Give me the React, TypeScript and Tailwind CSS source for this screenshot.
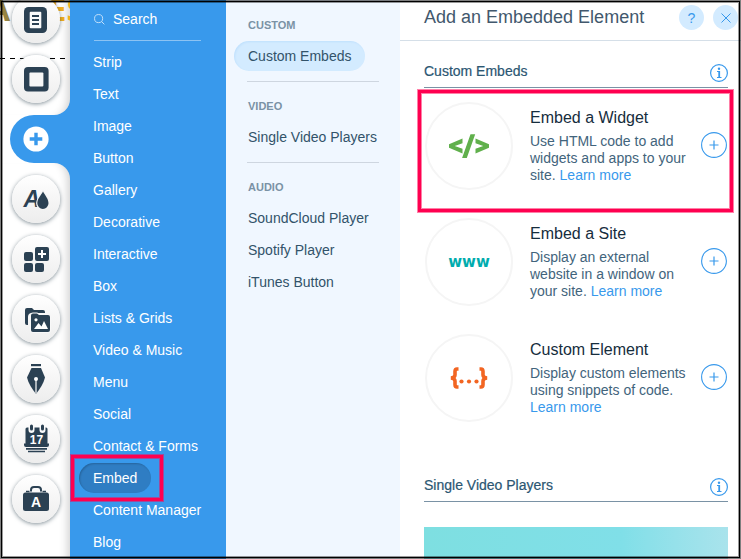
import type { ReactNode } from 'react'
import { clsx } from 'clsx'

const categories = [
  'Strip', 'Text', 'Image', 'Button', 'Gallery', 'Decorative', 'Interactive', 'Box',
  'Lists & Grids', 'Video & Music', 'Menu', 'Social', 'Contact & Forms', 'Embed',
  'Content Manager', 'Blog',
]

const groups = [
  { title: 'Custom', items: ['Custom Embeds'] },
  { title: 'Video', items: ['Single Video Players'] },
  { title: 'Audio', items: ['SoundCloud Player', 'Spotify Player', 'iTunes Button'] },
]

const INK = '#2b4153'

function Highlight({ className }: { className: string }) {
  return (
    <div
      className={clsx(
        'pointer-events-none absolute border-3 border-[#ff0050] shadow-[0_0_0_1px_rgba(255,0,80,0.5),inset_0_0_0_1px_rgba(255,0,80,0.5)]',
        className,
      )}
    />
  )
}

function RailButton({ label, children }: { label: string; children: ReactNode }) {
  return (
    <button
      aria-label={label}
      className="relative ml-3 size-12 shrink-0 rounded-full bg-linear-to-b from-white to-[#ededed] shadow-[0_1px_4px_rgba(22,45,61,0.55)]"
    >
      <svg viewBox="0 0 48 48" className="size-12" fill={INK}>{children}</svg>
    </button>
  )
}

function Rail() {
  return (
    <aside className="w-[70px] shrink-0 flex flex-col bg-[#3899ec]">
      <div className="relative flex flex-col gap-3 pb-3 rounded-br-2xl bg-white shadow-[inset_-10px_0_10px_-8px_rgba(0,0,0,0.2)]">
        {/* page content showing through behind the rail */}
        <div aria-hidden="true" className="absolute inset-x-0 -top-[7px] flex justify-between overflow-hidden text-[32px] leading-8 font-bold font-['Open_Sans',sans-serif]">
          <span className="-ml-3 text-[#968442]">A</span>
          <span className="-mr-3.5 text-[#f2b01e]">ES</span>
        </div>
        <svg aria-hidden="true" className="absolute left-0 top-[58px] h-px w-[66px]">
          <line x1="0" y1="0.5" x2="66" y2="0.5" stroke="#000" strokeDasharray="5 5" />
        </svg>
        <div className="-mt-[5px] flex flex-col gap-3">
          <RailButton label="Pages">
            <rect x="12" y="12" width="23" height="26" rx="4.5" />
            <rect x="17.7" y="16.8" width="11.6" height="16.4" rx="1" fill="#fafafa" />
            <path d="M20 21h7M20 25h7M20 29h7" stroke={INK} strokeWidth="1.8" />
          </RailButton>
          <RailButton label="Background">
            <rect x="12" y="12" width="24.6" height="24.6" rx="4" />
            <rect x="17.4" y="17.4" width="14" height="14" rx="1" fill="#f7f7f7" />
          </RailButton>
        </div>
      </div>

      <div className="bg-white pl-[10px]">
        <button aria-label="Add" className="flex h-12 w-full items-center rounded-l-full bg-[#3899ec] pl-[13px]">
          <svg viewBox="0 0 26 26" className="size-[26px]">
            <circle cx="13" cy="13" r="12.6" fill="#fff" />
            <path d="M13 6.7v12.6M6.7 13h12.6" stroke="#3899ec" strokeWidth="3.4" />
          </svg>
        </button>
      </div>

      <div className="flex flex-1 flex-col gap-3 pt-3 rounded-tr-2xl bg-white shadow-[inset_-10px_0_10px_-8px_rgba(0,0,0,0.2)]">
        <RailButton label="Theme">
          <text x="11.5" y="32" fontFamily="Liberation Sans, sans-serif" fontWeight="700" fontStyle="italic" fontSize="23">A</text>
          <path d="M31 16.5c2 3.8 5.5 7.3 5.5 11.8a5.6 5.6 0 0 1-11.2 0c0-4.5 3.7-8 5.7-11.800z" stroke="#f5f5f5" strokeWidth="2.4" paintOrder="stroke" />
        </RailButton>
        <RailButton label="Apps">
          <rect x="12" y="17" width="9" height="9" rx="2" />
          <rect x="12" y="28" width="9" height="9" rx="2" />
          <rect x="23" y="28" width="9" height="9" rx="2" />
          <rect x="23" y="12" width="14" height="14" rx="2" />
          <path d="M30 15v8M26 19h8" stroke="#fff" strokeWidth="2" />
        </RailButton>
        <RailButton label="Media">
          <path d="M13 15a2 2 0 0 1 2-2h5l2 2h9a2 2 0 0 1 2 2v1H20a4 4 0 0 0-4 4v8h-1a2 2 0 0 1-2-2z" />
          <path d="M19 20.5a2 2 0 0 1 2-2h4l2 1.5h9a2 2 0 0 1 2 2V35a2 2 0 0 1-2 2H21a2 2 0 0 1-2-2z" stroke="#f8f8f8" strokeWidth="2" paintOrder="stroke" />
          <circle cx="24" cy="24.8" r="1.6" fill="#fff" />
          <path d="M22 34l4.5-6 3 3.500 2.500-5.500 4 8z" fill="#fff" />
        </RailButton>
        <RailButton label="Blog">
          <rect x="19" y="9" width="10" height="2.2" />
          <path d="M19.5 13h9.500l4 9.500c-1.300 5.500-5 11.500-9 16.500-4-5-7.700-11-9-16.500z" />
          <path d="M24 24v15" stroke="#cbd0d4" strokeWidth="1.6" />
          <circle cx="24" cy="24" r="2" fill="#fff" />
        </RailButton>
        <RailButton label="Bookings">
          <rect x="18" y="9.5" width="3" height="6" rx="1.5" />
          <rect x="29" y="9.5" width="3" height="6" rx="1.5" />
          <path d="M15 12.5h1.500v2.500a3 3 0 0 0 6 0v-2.500h5v2.500a3 3 0 0 0 6 0v-2.500h.5a1.500 1.500 0 0 1 1.500 1.500v14.500H37v1.500a2 2 0 0 1-2 2H14a2 2 0 0 1-2-2v-1.500h1.500V14a1.500 1.500 0 0 1 1.500-1.500z" />
          <path d="M14 33.800h21M16 36.500h17" stroke={INK} strokeWidth="1.7" />
          <text x="24.5" y="28.5" textAnchor="middle" fill="#fff" fontFamily="Liberation Sans, sans-serif" fontWeight="700" fontSize="12">17</text>
        </RailButton>
        <RailButton label="Business">
          <path d="M19 16.5v-1.500a3 3 0 0 1 3-3h4a3 3 0 0 1 3 3v1.500" fill="none" stroke={INK} strokeWidth="2" />
          <rect x="11" y="17.5" width="26" height="18.5" rx="2.5" />
          <path d="M14 16.5h3.500M30.500 16.500H34" stroke={INK} strokeWidth="1.6" />
          <text x="24" y="32" textAnchor="middle" fill="#fff" fontFamily="Liberation Sans, sans-serif" fontWeight="700" fontSize="14">A</text>
        </RailButton>
      </div>
    </aside>
  )
}

function Categories() {
  return (
    <nav className="w-[156px] shrink-0 bg-[#3899ec] text-sm text-white">
      <label className="ml-6 mr-[25px] flex h-[41px] items-center gap-2 border-b border-[#8cc3f3] pb-0.5">
        <svg viewBox="0 0 12 12" className="size-[11px] shrink-0" fill="none" stroke="#cfe6fb">
          <circle cx="5" cy="5" r="4.4" />
          <path d="M8.3 8.3l3 3" />
        </svg>
        <input type="text" aria-label="Search" placeholder="Search" className="w-full min-w-0 bg-transparent outline-none placeholder:text-white" />
      </label>
      <ul className="pt-[5px] pl-[9px]">
        {categories.map(name => (
          <li key={name} className="relative flex h-8 items-center">
            <a
              href="#"
              className={clsx(
                'flex h-[30px] items-center rounded-full px-[14px] whitespace-nowrap',
                name === 'Embed' && 'bg-[#2f7dc3] shadow-[inset_1px_1px_2px_rgba(0,0,0,0.2)]',
              )}
            >
              {name}
            </a>
            {name === 'Embed' && <Highlight className="-left-2 -top-[7px] h-[46px] w-[92px]" />}
          </li>
        ))}
      </ul>
    </nav>
  )
}

function SubMenu() {
  return (
    <nav className="w-[174px] shrink-0 bg-[#f0f7ff] text-sm text-[#32536a]">
      {groups.map((group, i) => (
        <section key={group.title}>
          <div className={clsx('mx-[21px] border-t', i === 0 ? 'border-transparent' : 'border-[#ced6e0]')} />
          <h3 className="pt-4 pl-[22px] text-[11px] leading-4 font-bold uppercase text-[#7a92a5]">{group.title}</h3>
          <ul className="pt-[7px] pb-[9px] pl-2">
            {group.items.map(item => (
              <li key={item} className="flex h-8 items-center">
                <a
                  href="#"
                  className={clsx(
                    'flex h-[30px] items-center rounded-full px-[14px] whitespace-nowrap',
                    item === 'Custom Embeds' && 'bg-[#d3ebff] shadow-[inset_1px_1px_2px_rgba(56,153,236,0.12)]',
                  )}
                >
                  {item}
                </a>
              </li>
            ))}
          </ul>
        </section>
      ))}
    </nav>
  )
}

function SectionHeader({ title }: { title: string }) {
  return (
    <div className="flex h-[47px] items-end justify-between border-b border-[#7a92a5] pb-[5px] text-[#2b5672]">
      <h2 className="pb-[1px] text-sm leading-5 [-webkit-text-stroke:0.2px_#2b5672]">{title}</h2>
      <button aria-label={`About ${title}`}>
        <svg viewBox="0 0 18 18" className="size-[18px]" fill="none" stroke="#3899ec">
          <circle cx="9" cy="9" r="8.4" strokeWidth="1.2" />
          <path d="M7 7.500h2.500M7 13.500h4.500" strokeWidth="1.2" />
          <path d="M9.200 7v6.500" strokeWidth="1.8" />
          <circle cx="9" cy="4.7" r="1.2" fill="#3899ec" stroke="none" />
        </svg>
      </button>
    </div>
  )
}

function EmbedCard({ title, text, icon, highlighted }: { title: string; text: string; icon: ReactNode; highlighted?: boolean }) {
  return (
    <article className="relative flex h-[116px] items-center px-[1px]">
      <div className="mr-[17px] flex size-[88px] shrink-0 items-center justify-center rounded-full border-2 border-[#f5f5f5]">
        {icon}
      </div>
      <div className="min-w-0 flex-1 self-start pr-3 pt-5">
        <h3 className="text-base leading-5 whitespace-nowrap text-[#162d3d]">{title}</h3>
        <p className="pt-[5px] text-sm leading-[17px] text-[#42647c]">
          {text} <a href="#" className="whitespace-nowrap text-[#3899ec]">Learn more</a>
        </p>
      </div>
      <button aria-label={`Add ${title}`} className="shrink-0 pb-[3px]">
        <svg viewBox="0 0 26 26" className="size-[26px]" fill="none" stroke="#3899ec">
          <circle cx="13" cy="13" r="12.4" strokeWidth="1.1" />
          <path d="M13 8.500v9M8.500 13h9" strokeWidth="1.2" />
        </svg>
      </button>
      {highlighted && <Highlight className="-left-[6px] -right-[5px] top-[2px] -bottom-2" />}
    </article>
  )
}

export default function App() {
  return (
    <div className="relative flex h-screen overflow-hidden bg-white font-['Liberation_Sans',Arial,sans-serif]">
      <Rail />
      <Categories />
      <SubMenu />
      <main className="min-w-0 flex-1">
        <header className="flex h-[41px] items-start gap-[9px] border-b border-[#d5dfe8] pl-6 pr-[3px] pt-[5px]">
          <h1 className="flex-1 text-lg leading-[25px] whitespace-nowrap text-[#42586d]">Add an Embedded Element</h1>
          <button aria-label="Help" className="size-[25px] shrink-0 rounded-full bg-[#d3ebff] text-sm text-[#3899ec]">?</button>
          <button aria-label="Close" className="flex size-[25px] shrink-0 items-center justify-center rounded-full bg-[#d3ebff]">
            <svg viewBox="0 0 10 10" className="size-[10px]" stroke="#3899ec"><path d="M0.5 0.5l9 9M9.5 0.5l-9 9" /></svg>
          </button>
        </header>

        <div className="pl-6 pr-[13px]">
          <SectionHeader title="Custom Embeds" />
          <EmbedCard
            highlighted
            title="Embed a Widget"
            text="Use HTML code to add widgets and apps to your site."
            icon={
              <svg viewBox="0 0 42 26" className="h-[26px] w-[42px]" fill="#60b04c">
                <path d="M14.500 5.500v4.800L6.800 13l7.700 2.800v4.700L1 14.800v-3.500zM27.500 5.500v4.800l7.700 2.700-7.700 2.800v4.700L41 14.800v-3.500zM22.500 1.200h4.700L18.800 25h-4.700z" />
              </svg>
            }
          />
          <EmbedCard
            title="Embed a Site"
            text="Display an external website in a window on your site."
            icon={<span className="text-[15px] leading-5 font-bold text-[#00acae] font-['DejaVu_Sans',sans-serif]">www</span>}
          />
          <EmbedCard
            title="Custom Element"
            text="Display custom elements using snippets of code."
            icon={
              <svg viewBox="0 0 40 22" className="h-[22px] w-10" fill="none" stroke="#f26522" strokeWidth="3.6">
                <path d="M9.500 2H8Q6 2 6 4.500v3.500q0 2.500-4 3 4 .5 4 3v3.500Q6 20 8 20h1.500M30.500 2H32q2 0 2 2.500v3.500q0 2.500 4 3-4 .5-4 3v3.500q0 2.500-2 2.500h-1.500" />
                <g fill="#f26522" stroke="none">
                  <circle cx="12.500" cy="14.500" r="2.100" />
                  <circle cx="20" cy="14.500" r="2.100" />
                  <circle cx="27.500" cy="14.500" r="2.100" />
                </g>
              </svg>
            }
          />

          <div className="pt-[19px]">
            <SectionHeader title="Single Video Players" />
            <div className="mt-[25px] h-40 bg-linear-to-r from-[#7edfe1] via-[#80dfe8] via-65% to-[#a9e3ec]" />
          </div>
        </div>
      </main>

      {/* window frame */}
      <div className="pointer-events-none absolute inset-0 border border-black/50">
        <div className="h-full border border-black shadow-[inset_0_0_0_1px_rgba(0,0,0,0.4)]" />
      </div>
    </div>
  )
}
